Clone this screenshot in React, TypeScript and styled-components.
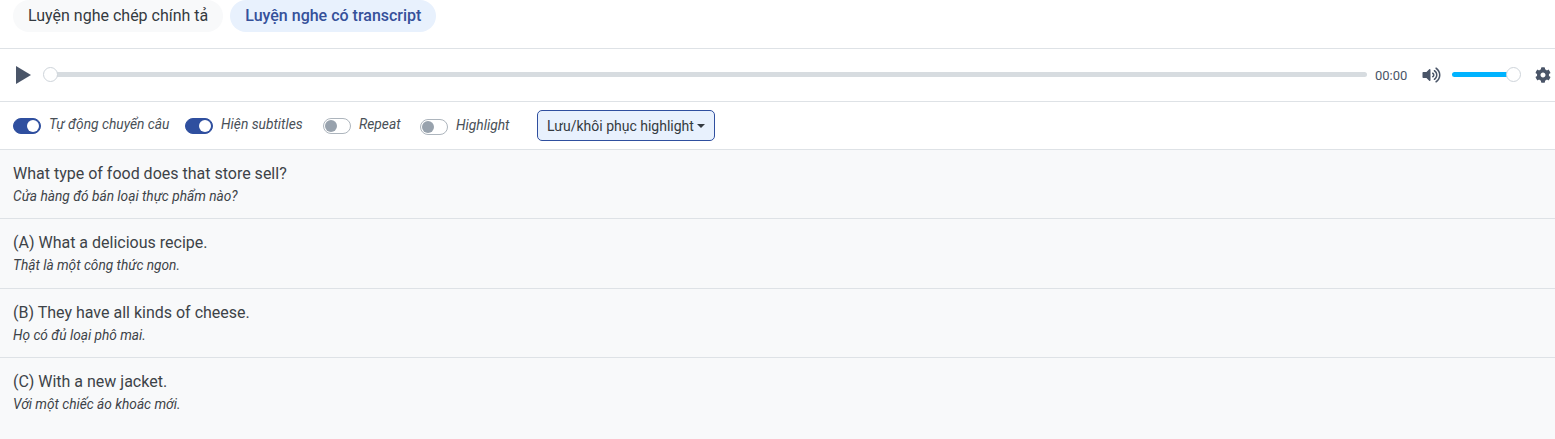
import React from 'react';
import styled, { createGlobalStyle } from 'styled-components';
import { FaCog, FaVolumeUp } from 'react-icons/fa';

const GlobalStyle = createGlobalStyle`
    html, body {
        margin: 0;
        padding: 0;
        background: #fff;
        font-family: Roboto, "Noto Sans", sans-serif;
        color: #343a40;
    }
`;

const Page = styled.div`
    width: 1555px;
    height: 439px;
    overflow: hidden;
    display: flex;
    flex-direction: column;
`;
const Tabs = styled.div`
    display: flex;
    gap: 7px;
    height: 48px;
    flex: none;
    padding-left: 13px;
    border-bottom: 1px solid #dee2e6;
`;
const Tab = styled.div<{ $active?: boolean }>`
    height: 32px;
    line-height: 31px;
    padding: 0 15px;
    border-radius: 16px;
    font-size: 16px;
    font-weight: ${p => (p.$active ? 500 : 400)};
    background: ${p => (p.$active ? '#e8f1fd' : '#f8f9fa')};
    color: ${p => (p.$active ? '#35509a' : '#343a40')};
`;
const Player = styled.div`
    display: flex;
    align-items: center;
    height: 52px;
    flex: none;
    padding: 0 4px 0 16px;
    border-bottom: 1px solid #dee2e6;
    color: #4a5568;
`;
const PlayIcon = styled.svg`
    display: block;
    flex: none;
    fill: #4a5568;
`;
const VolumeIcon = styled(FaVolumeUp)`
    flex: none;
    margin-left: 15px;
    width: 19px;
    height: 16px;
`;
const GearIcon = styled(FaCog)`
    flex: none;
    margin-left: 21px;
    width: 16px;
    height: 16px;
`;
const Seek = styled.div`
    position: relative;
    flex: none;
    width: 1317px;
    height: 5px;
    margin: 0 0 1px 19px;
    border-radius: 3px;
    background: #d7dce0;
`;
const Volume = styled.div`
    position: relative;
    flex: none;
    width: 62px;
    height: 5px;
    margin: 0 0 1px 11px;
    border-radius: 3px;
    background: #00b3ff;
`;
const Thumb = styled.span<{ $end?: boolean }>`
    position: absolute;
    top: -5px;
    ${p => (p.$end ? 'right: -7px;' : 'left: -7px;')}
    width: 13px;
    height: 13px;
    border-radius: 50%;
    background: #fff;
    border: 1px solid #ced4da;
`;
const Time = styled.span`
    width: 33px;
    margin-left: 8px;
    font-size: 13px;
    color: #4a5568;
`;
const Options = styled.div`
    display: flex;
    align-items: center;
    height: 47px;
    flex: none;
    padding-left: 13px;
    border-bottom: 1px solid #dee2e6;
`;
const Option = styled.label<{ $width: number; $low?: boolean }>`
    display: flex;
    align-items: center;
    width: ${p => p.$width}px;
    flex: none;
    margin-top: ${p => (p.$low ? '2px' : '0')};
    font-size: 13.8px;
    font-style: italic;
    color: #495057;
`;
const OptionText = styled.span`
    margin-bottom: 4px;
`;
const Switch = styled.span<{ $on?: boolean }>`
    position: relative;
    width: 28px;
    height: 16px;
    box-sizing: border-box;
    margin-right: 8px;
    border-radius: 8px;
    flex: none;
    background: ${p => (p.$on ? '#2f4f9f' : '#fff')};
    border: 1px solid ${p => (p.$on ? '#2f4f9f' : '#adb5bd')};
    &::after {
        content: '';
        position: absolute;
        top: 1px;
        left: ${p => (p.$on ? '13px' : '1px')};
        width: 12px;
        height: 12px;
        border-radius: 50%;
        background: ${p => (p.$on ? '#fff' : '#98a2ad')};
    }
`;
const Dropdown = styled.button`
    width: 178px;
    height: 31px;
    padding: 0;
    margin-left: 28px;
    border: 1px solid #2f4f9f;
    border-radius: 5px;
    background: #e8f1fd;
    font-family: inherit;
    font-size: 14px;
    color: #343a40;
    display: flex;
    align-items: center;
    justify-content: center;
    &::after {
        content: '';
        margin-left: 3px;
        border-top: 4px solid #343a40;
        border-left: 4px solid transparent;
        border-right: 4px solid transparent;
    }
`;
const Sentence = styled.div`
    height: 68.4px;
    flex: none;
    padding: 0 13px;
    background: #f8f9fa;
    border-bottom: 1px solid #dee2e6;
    &:last-child {
        flex: 1;
        border-bottom: 0;
    }
`;
const English = styled.div`
    padding-top: 13px;
    font-size: 16px;
    line-height: 21px;
    color: #3d4348;
`;
const Vietnamese = styled.div`
    margin-top: 4px;
    font-size: 13.7px;
    line-height: 17px;
    font-style: italic;
    color: #3d4348;
`;

const sentences = [
    { en: 'What type of food does that store sell?', vi: 'Cửa hàng đó bán loại thực phẩm nào?' },
    { en: '(A) What a delicious recipe.', vi: 'Thật là một công thức ngon.' },
    { en: '(B) They have all kinds of cheese.', vi: 'Họ có đủ loại phô mai.' },
    { en: '(C) With a new jacket.', vi: 'Với một chiếc áo khoác mới.' }
];

const App: React.FC = () => {
    return (
        <Page>
            <GlobalStyle />
            <Tabs>
                <Tab>Luyện nghe chép chính tả</Tab>
                <Tab $active>Luyện nghe có transcript</Tab>
            </Tabs>
            <Player>
                <PlayIcon width="15" height="18" viewBox="0 0 15 18">
                    <path d="M0 0 L15 9 L0 18 Z" />
                </PlayIcon>
                <Seek>
                    <Thumb />
                </Seek>
                <Time>00:00</Time>
                <VolumeIcon />
                <Volume>
                    <Thumb $end />
                </Volume>
                <GearIcon />
            </Player>
            <Options>
                <Option $width={172}>
                    <Switch $on />
                    <OptionText>Tự động chuyển câu</OptionText>
                </Option>
                <Option $width={138}>
                    <Switch $on />
                    <OptionText>Hiện subtitles</OptionText>
                </Option>
                <Option $width={97}>
                    <Switch />
                    <OptionText>Repeat</OptionText>
                </Option>
                <Option $width={89} $low>
                    <Switch />
                    <OptionText>Highlight</OptionText>
                </Option>
                <Dropdown>Lưu/khôi phục highlight</Dropdown>
            </Options>
            {sentences.map(s => (
                <Sentence key={s.en}>
                    <English>{s.en}</English>
                    <Vietnamese>{s.vi}</Vietnamese>
                </Sentence>
            ))}
        </Page>
    );
};

export default App;
